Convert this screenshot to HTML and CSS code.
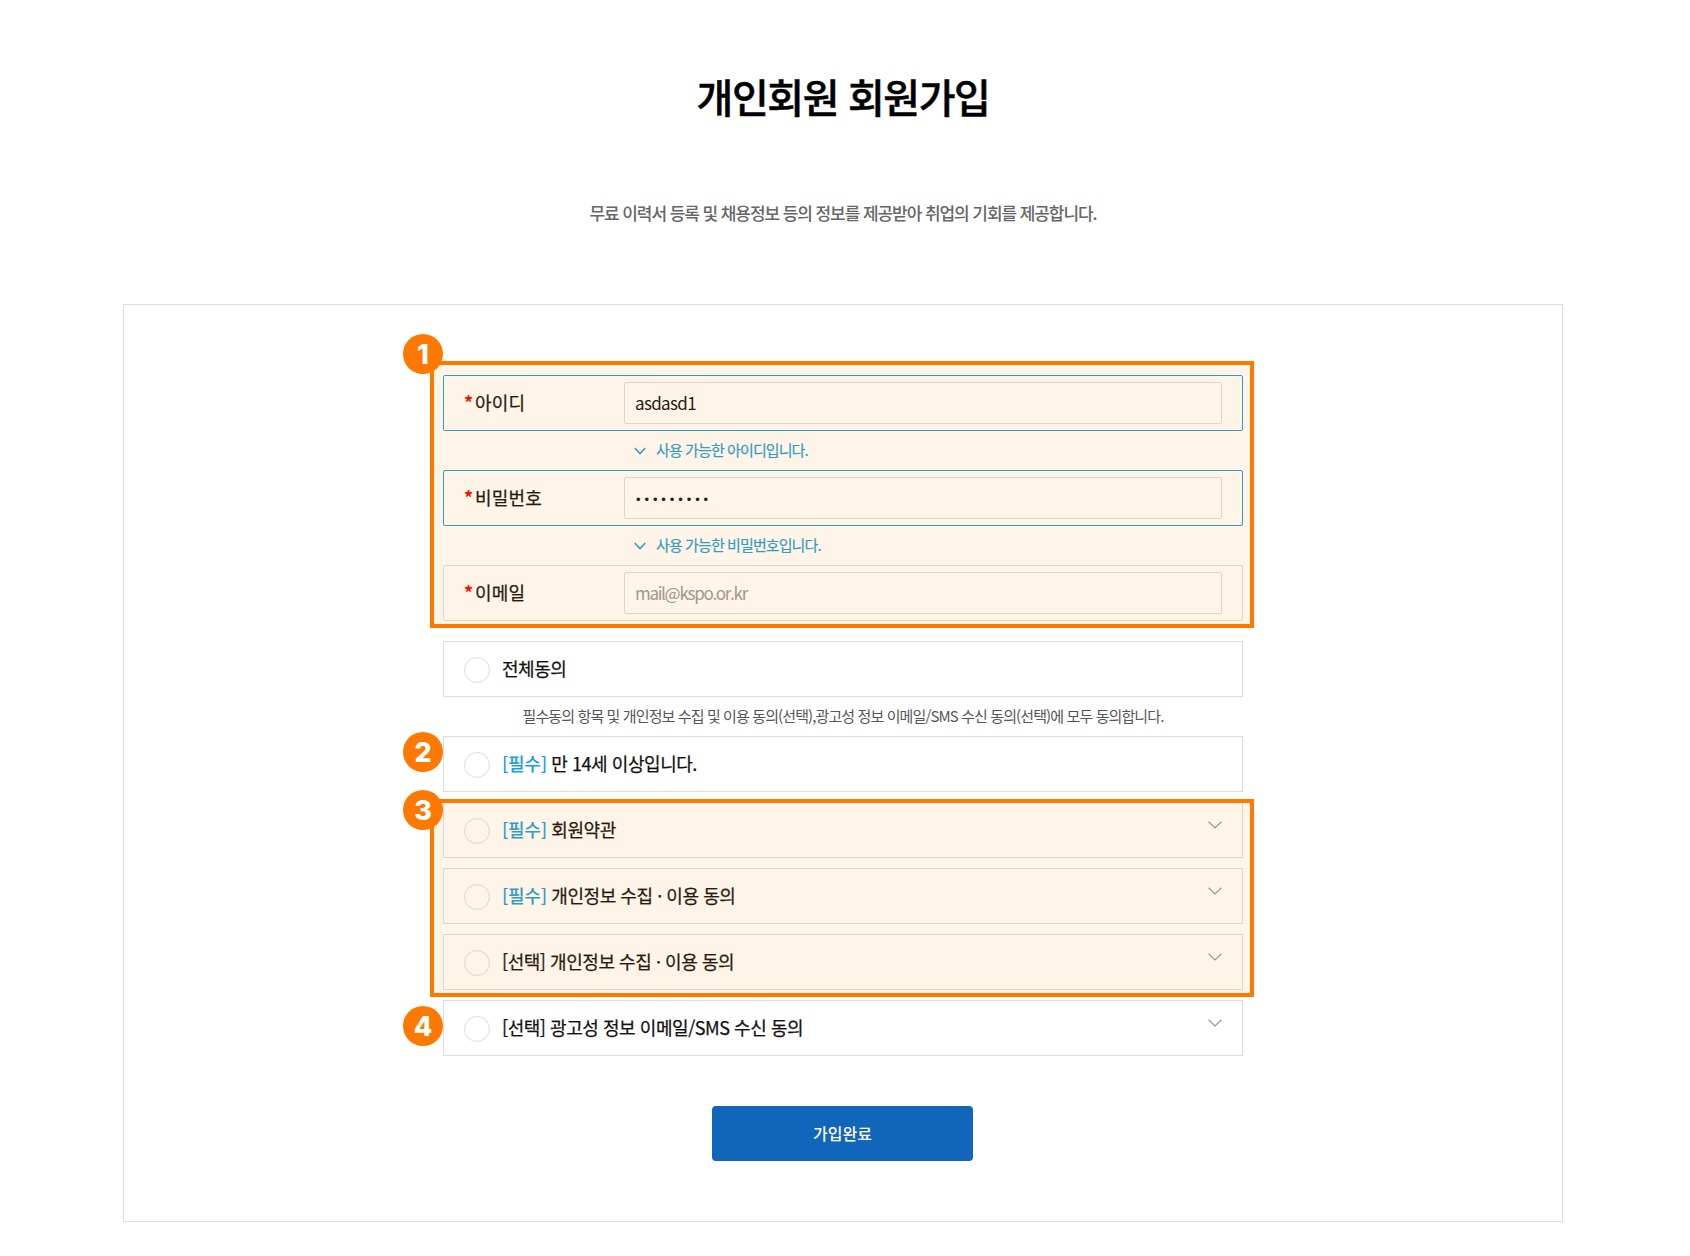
FILE: index.html
```html
<!DOCTYPE html>
<html lang="ko">
<head>
<meta charset="utf-8">
<title>개인회원 회원가입</title>
<link rel="stylesheet" href="styles.css">
</head>
<body>
<main class="page">
  <header class="head">
    <h1 class="title">개인회원 회원가입</h1>
    <p class="lead">무료 이력서 등록 및 채용정보 등의 정보를 제공받아 취업의 기회를 제공합니다.</p>
  </header>
  <section class="card">
    <form class="form">
      <div class="field is-ok">
        <label class="label"><span class="req">*</span>아이디</label>
        <input class="input" type="text" value="asdasd1">
      </div>
      <p class="msg"><svg class="msg-icon" width="12" height="8" viewBox="0 0 12 8"><path d="M.7.9 6 6.6 11.3.9" fill="none" stroke="currentColor" stroke-width="1.4"/></svg>사용 가능한 아이디입니다.</p>
      <div class="field is-ok">
        <label class="label"><span class="req">*</span>비밀번호</label>
        <input class="input input-pw" type="password" value="asdasd123">
      </div>
      <p class="msg"><svg class="msg-icon" width="12" height="8" viewBox="0 0 12 8"><path d="M.7.9 6 6.6 11.3.9" fill="none" stroke="currentColor" stroke-width="1.4"/></svg>사용 가능한 비밀번호입니다.</p>
      <div class="field">
        <label class="label"><span class="req">*</span>이메일</label>
        <input class="input" type="text" placeholder="mail@kspo.or.kr">
      </div>

      <div class="agree agree-all"><span class="radio"></span><span class="agree-text">전체동의</span></div>
      <p class="note">필수동의 항목 및 개인정보 수집 및 이용 동의(선택),광고성 정보 이메일/SMS 수신 동의(선택)에 모두 동의합니다.</p>
      <div class="agree"><span class="radio"></span><span class="agree-text"><b class="tag">[필수]</b> 만 14세 이상입니다.</span></div>
      <div class="agree agree-gap"><span class="radio"></span><span class="agree-text"><b class="tag">[필수]</b> 회원약관</span><svg class="chev" width="14" height="8" viewBox="0 0 14 8"><path d="M.6.7 7 6.9 13.4.7" fill="none" stroke="currentColor" stroke-width="1.3"/></svg></div>
      <div class="agree agree-gap"><span class="radio"></span><span class="agree-text"><b class="tag">[필수]</b> 개인정보 수집 · 이용 동의</span><svg class="chev" width="14" height="8" viewBox="0 0 14 8"><path d="M.6.7 7 6.9 13.4.7" fill="none" stroke="currentColor" stroke-width="1.3"/></svg></div>
      <div class="agree agree-gap"><span class="radio"></span><span class="agree-text">[선택] 개인정보 수집 · 이용 동의</span><svg class="chev" width="14" height="8" viewBox="0 0 14 8"><path d="M.6.7 7 6.9 13.4.7" fill="none" stroke="currentColor" stroke-width="1.3"/></svg></div>
      <div class="agree agree-gap"><span class="radio"></span><span class="agree-text">[선택] 광고성 정보 이메일/SMS 수신 동의</span><svg class="chev" width="14" height="8" viewBox="0 0 14 8"><path d="M.6.7 7 6.9 13.4.7" fill="none" stroke="currentColor" stroke-width="1.3"/></svg></div>

      <div class="actions"><button class="submit" type="button">가입완료</button></div>

      <div class="mark mark-a"></div>
      <div class="mark mark-b"></div>
      <span class="badge badge-1">1</span>
      <span class="badge badge-2">2</span>
      <span class="badge badge-3">3</span>
      <span class="badge badge-4">4</span>
    </form>
  </section>
</main>
</body>
</html>
```
FILE: styles.css
```css
* { box-sizing: border-box; }
html, body { margin: 0; padding: 0; background: #fff; }
body {
  font-family: "Noto Sans CJK KR", "Noto Sans", sans-serif;
  color: #111;
}
.page { width: 1440px; margin-left: 123px; padding-bottom: 34px; }

.head { height: 304px; padding-top: 65px; text-align: center; }
.title {
  margin: 0;
  font-size: 40px;
  line-height: 62px;
  font-weight: 500;
  -webkit-text-stroke: 0.5px #000;
  letter-spacing: -1.4px;
  color: #000;
}
.lead {
  margin: 73px 0 0;
  font-size: 17px;
  line-height: 26px;
  font-weight: 500;
  letter-spacing: -1.07px;
  color: #666;
}

.card {
  height: 918px;
  border: 1px solid #ddd;
  padding-top: 70px;
}
.form { position: relative; width: 800px; margin: 0 auto; }

.field {
  display: flex;
  align-items: center;
  height: 56px;
  padding: 0 20px;
  border: 1px solid #ddd;
  border-radius: 2px;
}
.field.is-ok { border-color: #1b9fd9; }
.label {
  display: flex;
  align-items: center;
  width: 160px;
  flex: none;
  padding-bottom: 2px;
  font-size: 18px;
  font-weight: 400;
  -webkit-text-stroke: 0.25px #111;
  letter-spacing: 0.2px;
}
.req { color: #f00; width: 11px; font-size: 18px; font-weight: 700; -webkit-text-stroke: 0; }
.input {
  flex: 1;
  min-width: 0;
  height: 42px;
  padding: 0 10px 2px;
  border: 1px solid #ddd;
  border-radius: 2px;
  background: #fff;
  font: 400 17px "Noto Sans CJK KR", "Noto Sans", sans-serif;
  letter-spacing: -0.65px;
  color: #111;
  outline: 0;
}
.input::placeholder { color: #999; opacity: 1; letter-spacing: -1.3px; }
.input-pw {
  padding: 3px 10px 0 11px;
  font: 400 13px "Liberation Sans", sans-serif;
  letter-spacing: 3.9px;
}

.msg {
  display: flex;
  align-items: center;
  height: 39px;
  margin: 0;
  padding: 0 0 2px 191px;
  font-size: 15px;
  font-weight: 400;
  -webkit-text-stroke: 0.2px #1b9fd9;
  letter-spacing: -0.9px;
  color: #1b9fd9;
}
.msg-icon { margin: 2px 10px 0 0; }

.agree {
  display: flex;
  align-items: center;
  height: 56px;
  padding: 0 20px;
  border: 1px solid #ddd;
  font-size: 18px;
  font-weight: 400;
  letter-spacing: -0.45px;
}
.agree-all { margin-top: 20px; }
.agree-gap { margin-top: 10px; }
.radio {
  flex: none;
  width: 26px;
  height: 26px;
  margin: 2px 12px 0 0;
  border: 1px solid #ddd;
  border-radius: 50%;
  background: #fff;
}
.agree-text { flex: 1; padding-bottom: 2px; -webkit-text-stroke: 0.25px #111; }
.tag { font-weight: 500; color: #1a9fdc; -webkit-text-stroke: 0; letter-spacing: -0.3px; }
.chev { flex: none; align-self: flex-start; margin-top: 18px; color: #999; }

.note {
  height: 39px;
  margin: 0;
  font-size: 15px;
  line-height: 37px;
  letter-spacing: -0.89px;
  text-align: center;
  color: #555;
}

.actions { display: flex; justify-content: center; margin-top: 50px; }
.submit {
  width: 261px;
  height: 55px;
  margin-right: 1px;
  padding: 0 0 2px;
  border: 0;
  border-radius: 4px;
  background: #1165bb;
  color: #fff;
  font: 500 16px "Noto Sans CJK KR", "Noto Sans", sans-serif;
  letter-spacing: 0;
}

.mark {
  position: absolute;
  left: -13px;
  right: -11px;
  border: 4px solid #ff7800;
  background: rgba(255, 130, 0, 0.09);
  pointer-events: none;
}
.mark-a { top: -14px; height: 267px; }
.mark-b { top: 424px; height: 198px; }
.badge {
  position: absolute;
  left: -40px;
  width: 40px;
  height: 40px;
  border-radius: 50%;
  background: #ff7800;
  color: #fff;
  font: 800 27px/41px "Inter", sans-serif;
  text-align: center;
}
.badge-1 { top: -41px; }
.badge-2 { top: 357px; }
.badge-3 { top: 415px; }
.badge-4 { top: 631px; }
```
